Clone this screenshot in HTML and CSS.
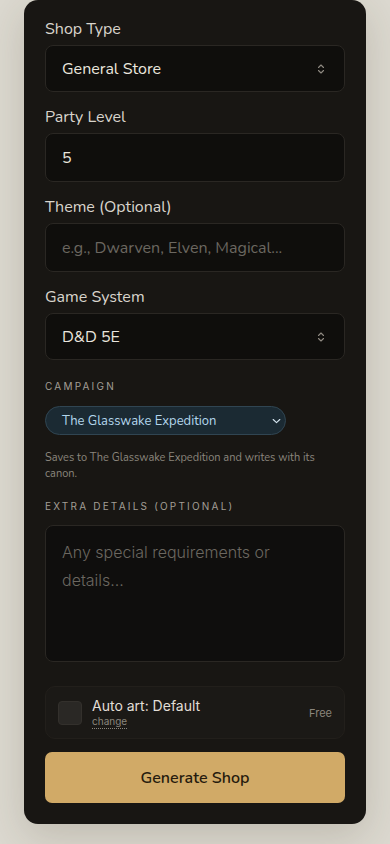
FILE: index.html
```html
<!DOCTYPE html>
<html lang="en">
<head>
  <meta charset="UTF-8">
  <meta name="viewport" content="width=device-width, initial-scale=1.0">
  <title>Shop Generator</title>
  <link rel="stylesheet" href="styles.css">
</head>
<body>
  <div class="card">
    <div class="field">
      <label class="label">Shop Type</label>
      <div class="control select">
        <span>General Store</span>
        <svg class="updown" width="10" height="12" viewBox="0 0 10 12"><path d="M2.5 4.5 5 2l2.5 2.5M2.5 7.5 5 10l2.5-2.5" fill="none" stroke="#8f8a82" stroke-width="1.1" stroke-linecap="round" stroke-linejoin="round"/></svg>
      </div>
    </div>
    <div class="field">
      <label class="label">Party Level</label>
      <div class="control input">5</div>
    </div>
    <div class="field">
      <label class="label">Theme (Optional)</label>
      <div class="control input placeholder">e.g., Dwarven, Elven, Magical...</div>
    </div>
    <div class="field">
      <label class="label">Game System</label>
      <div class="control select">
        <span>D&amp;D 5E</span>
        <svg class="updown" width="10" height="12" viewBox="0 0 10 12"><path d="M2.5 4.5 5 2l2.5 2.5M2.5 7.5 5 10l2.5-2.5" fill="none" stroke="#8f8a82" stroke-width="1.1" stroke-linecap="round" stroke-linejoin="round"/></svg>
      </div>
    </div>

    <div class="small-label">Campaign</div>
    <div class="campaign">
      <span>The Glasswake Expedition</span>
      <svg width="9" height="6" viewBox="0 0 9 6"><path d="M1.2 1.5 4.5 4.6l3.3-3.1" fill="none" stroke="#d6e6f0" stroke-width="1.1" stroke-linecap="round" stroke-linejoin="round"/></svg>
    </div>
    <p class="hint">Saves to The Glasswake Expedition and writes with its canon.</p>

    <div class="small-label details-label">Extra Details (Optional)</div>
    <div class="textarea">Any special requirements or details...</div>

    <div class="art">
      <div class="checkbox"></div>
      <div class="art-text">
        <div class="art-title">Auto art: Default</div>
        <span class="change">change</span>
      </div>
      <div class="free">Free</div>
    </div>

    <button class="generate">Generate Shop</button>
  </div>
</body>
</html>
```

FILE: styles.css
```css
body {
  margin: 0;
  min-height: 844px;
  background: #dcd9d0;
  font-family: 'Nunito', 'Lato', 'Open Sans', sans-serif;
  display: flex;
  justify-content: center;
  align-items: flex-start;
}
.card {
  width: 342px;
  box-sizing: border-box;
  background: #181613;
  border-radius: 14px;
  padding: 19px 21px 21px;
  box-shadow: 0 12px 40px rgba(60, 50, 30, 0.18);
}
.field {
  display: flex;
  flex-direction: column;
  margin-bottom: 15px;
}
.label {
  color: #d8d4cc;
  font-size: 16px;
  line-height: 20px;
  margin-bottom: 6px;
}
.control {
  box-sizing: border-box;
  height: 49px;
  background: #0f0e0c;
  border: 1px solid #2a2723;
  border-radius: 8px;
  padding: 0 16px;
  display: flex;
  align-items: center;
  justify-content: space-between;
  color: #eae6de;
  font-size: 16px;
}
.select {
  height: 47px;
}
.updown {
  margin-right: 2px;
}
.placeholder {
  color: #6b6760;
}
.small-label {
  font-family: 'Inter', 'DejaVu Sans', sans-serif;
  font-size: 10px;
  letter-spacing: 0.22em;
  text-transform: uppercase;
  color: #a39e95;
  line-height: 14px;
  margin-top: 19px;
  margin-bottom: 13px;
}
.details-label {
  margin-top: 0;
  margin-bottom: 12px;
}
.campaign {
  width: 241px;
  height: 29px;
  box-sizing: border-box;
  background: #1b2a33;
  border: 1px solid #304552;
  border-radius: 15px;
  padding: 0 4px 0 16px;
  display: flex;
  align-items: center;
  justify-content: space-between;
  color: #b3d6ec;
  font-size: 13px;
}
.hint {
  font-size: 11px;
  line-height: 16px;
  color: #8a857c;
  margin: 15px 0 17px;
  padding-right: 30px;
}
.textarea {
  box-sizing: border-box;
  height: 137px;
  background: #0f0e0d;
  border: 1px solid #2a2723;
  border-radius: 8px;
  padding: 12px 60px 0 16px;
  font-family: 'Inter', 'DejaVu Sans', sans-serif;
  font-size: 16px;
  font-weight: 300;
  line-height: 28px;
  color: #6b6760;
  margin-bottom: 24px;
}
.art {
  box-sizing: border-box;
  height: 53px;
  background: #1b1916;
  border: 1px solid #221f1b;
  border-radius: 10px;
  padding: 0 12px;
  display: flex;
  align-items: center;
  gap: 10px;
  margin-bottom: 13px;
}
.checkbox {
  width: 24px;
  height: 24px;
  box-sizing: border-box;
  background: #2a2825;
  border: 1px solid #33302c;
  border-radius: 4px;
}
.art-text {
  flex: 1;
  display: flex;
  flex-direction: column;
  font-family: 'Inter', 'DejaVu Sans', sans-serif;
}
.art-title {
  color: #e2ded6;
  font-size: 14px;
  line-height: 18px;
}
.change {
  align-self: flex-start;
  color: #8a857c;
  font-size: 10px;
  line-height: 13px;
  border-bottom: 1px dotted #8a857c;
}
.free {
  font-family: 'Inter', 'DejaVu Sans', sans-serif;
  color: #8a857c;
  font-size: 11px;
}
.generate {
  display: block;
  width: 100%;
  height: 51px;
  border: none;
  border-radius: 7px;
  background: #d1aa67;
  color: #261b0e;
  font-family: 'Nunito', 'Lato', sans-serif;
  font-size: 16px;
  font-weight: 600;
  cursor: pointer;
}
```
